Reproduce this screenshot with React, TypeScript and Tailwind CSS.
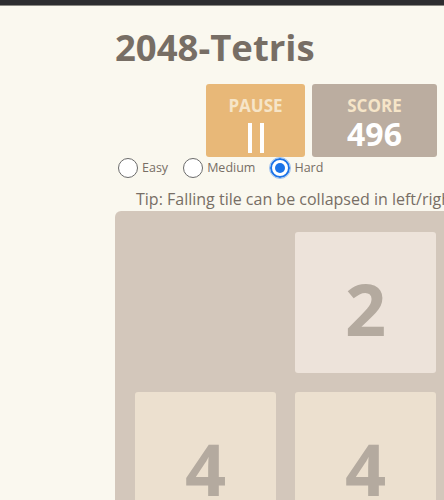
import { ReactNode } from 'react';

type Cell = number | null;

const board: Cell[][] = [
    [null, 2, null, null],
    [4, 4, null, null],
    [null, null, null, null],
    [null, null, null, null],
];

const tileColors: Record<number, string> = {
    2: 'bg-[#ede3da]',
    4: 'bg-[#ece0cf]',
};

function Radio({ label, checked }: { label: string; checked?: boolean }) {
    return (
        <label className="flex items-center gap-[4px]">
            {checked ? (
                <span className="flex h-5 w-5 items-center justify-center rounded-full border-2 border-[#1a73e8] bg-white outline outline-1 outline-[#9cc0f0]">
                    <span className="h-[10px] w-[10px] rounded-full bg-[#1a73e8]" />
                </span>
            ) : (
                <span className="h-5 w-5 rounded-full border-[1.5px] border-[#6b6b6b] bg-white" />
            )}
            <span className="text-[12.5px] leading-[18px] text-[#776e65]">{label}</span>
        </label>
    );
}

function ScoreBox({ title, className, children }: { title: string; className: string; children: ReactNode }) {
    return (
        <div className={`flex h-[73px] shrink-0 flex-col items-center rounded-[3px] pt-[13px] ${className}`}>
            <div className="text-[17px] font-bold leading-[17px] text-[#f6e5c8]">{title}</div>
            {children}
        </div>
    );
}

export default function App() {
    return (
        <div
            className="min-h-screen overflow-hidden bg-[#faf8ef]"
            style={{ fontFamily: '"Open Sans", "Noto Sans", sans-serif' }}
        >
            <div className="h-[5px] bg-[#2d2d30]" />
            <div className="h-px bg-[#8a8983]" />

            <div className="w-[720px] pl-[115px]">
                <h1 className="mt-[23px] text-[36.5px] font-bold leading-[37px] text-[#776e65]">2048-Tetris</h1>

                <div className="ml-[91px] mt-[18px] flex gap-[7px]">
                    <ScoreBox title="PAUSE" className="w-[99px] bg-[#e8b878]">
                        <div className="mt-[9px] flex gap-[8px]">
                            <span className="h-[30px] w-[4px] bg-white" />
                            <span className="h-[30px] w-[4px] bg-white" />
                        </div>
                    </ScoreBox>
                    <ScoreBox title="SCORE" className="w-[125px] bg-[#bbada0]">
                        <div className="mt-[4px] text-[32px] font-bold leading-[32px] text-white">496</div>
                    </ScoreBox>
                    <ScoreBox title="BEST" className="w-[110px] bg-[#bbada0]">
                        <div className="mt-[4px] text-[32px] font-bold leading-[32px] text-white">496</div>
                    </ScoreBox>
                </div>

                <div className="ml-[3px] mt-px flex gap-[15px]">
                    <Radio label="Easy" />
                    <Radio label="Medium" />
                    <Radio label="Hard" checked />
                </div>

                <p className="ml-[21px] mt-[11px] whitespace-nowrap text-[16px] leading-[20px] text-[#776e65]">
                    Tip: Falling tile can be collapsed in left/right direction
                </p>

                <div className="mt-[2px] grid w-[661px] grid-cols-[repeat(4,141px)] gap-[19px] rounded-[6px] bg-[#d3c7bb] px-[20px] py-[21px]">
                    {board.flat().map((v, i) => (
                        <div
                            key={i}
                            className={`h-[141px] w-[141px] rounded-[3px] ${v ? tileColors[v] : ''}`}
                        >
                            {v && (
                                <div className="pt-[11px] text-center text-[72px] font-bold leading-[130px] text-[#b4aa9f]">
                                    {v}
                                </div>
                            )}
                        </div>
                    ))}
                </div>
            </div>
        </div>
    );
}
